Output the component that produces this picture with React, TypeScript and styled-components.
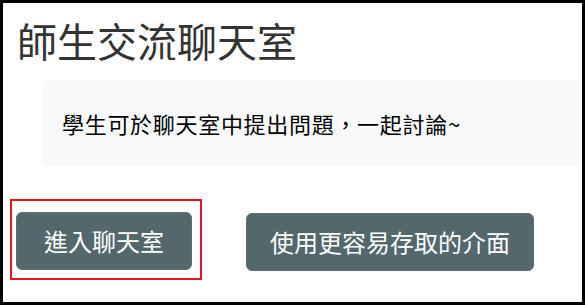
import React from 'react';
import styled, { createGlobalStyle } from 'styled-components';

const GlobalStyle = createGlobalStyle`
  html, body {
    margin: 0;
    padding: 0;
    background: #fff;
  }

  body {
    font-family: 'Noto Sans CJK TC', 'Noto Sans', sans-serif;
  }
`;

const Frame = styled.div`
  box-sizing: border-box;
  width: 585px;
  height: 305px;
  border: 3px solid #000;
  overflow: hidden;
  display: flex;
  flex-direction: column;
`;

const Title = styled.h1`
  margin: 0;
  padding: 13px 0 0 14px;
  font-size: 40px;
  line-height: 48px;
  font-weight: 400;
  color: #333;
`;

const Notice = styled.div`
  box-sizing: border-box;
  margin: 16px 0 0 40px;
  height: 86px;
  padding-left: 19px;
  display: flex;
  align-items: center;
  background: #f8f9fa;
  border-radius: 4px 0 0 4px;
`;

const NoticeText = styled.p`
  margin: 0;
  font-size: 22px;
  line-height: 1;
  letter-spacing: 0.7px;
  color: #000;
`;

const Actions = styled.div`
  display: flex;
  align-items: flex-start;
  gap: 44px;
  margin: 33px 0 0 7px;
`;

const Highlight = styled.div`
  border: 2px solid #e3161d;
  padding: 11px 8px 8px 4px;
`;

const Button = styled.button<{ $px: number }>`
  box-sizing: border-box;
  height: 58px;
  padding: 0 ${(p) => p.$px}px;
  border: 1px solid #5f7177;
  border-radius: 6px;
  background: #53676d;
  color: #fff;
  font-family: inherit;
  font-size: 24px;
  line-height: 1;
  cursor: pointer;
`;

const SecondSlot = styled.div`
  padding-top: 14px;
`;

export default function App() {
  return (
    <>
      <GlobalStyle />
      <Frame>
        <Title>師生交流聊天室</Title>
        <Notice>
          <NoticeText>學生可於聊天室中提出問題，一起討論~</NoticeText>
        </Notice>
        <Actions>
          <Highlight>
            <Button $px={27}>進入聊天室</Button>
          </Highlight>
          <SecondSlot>
            <Button $px={23}>使用更容易存取的介面</Button>
          </SecondSlot>
        </Actions>
      </Frame>
    </>
  );
}
